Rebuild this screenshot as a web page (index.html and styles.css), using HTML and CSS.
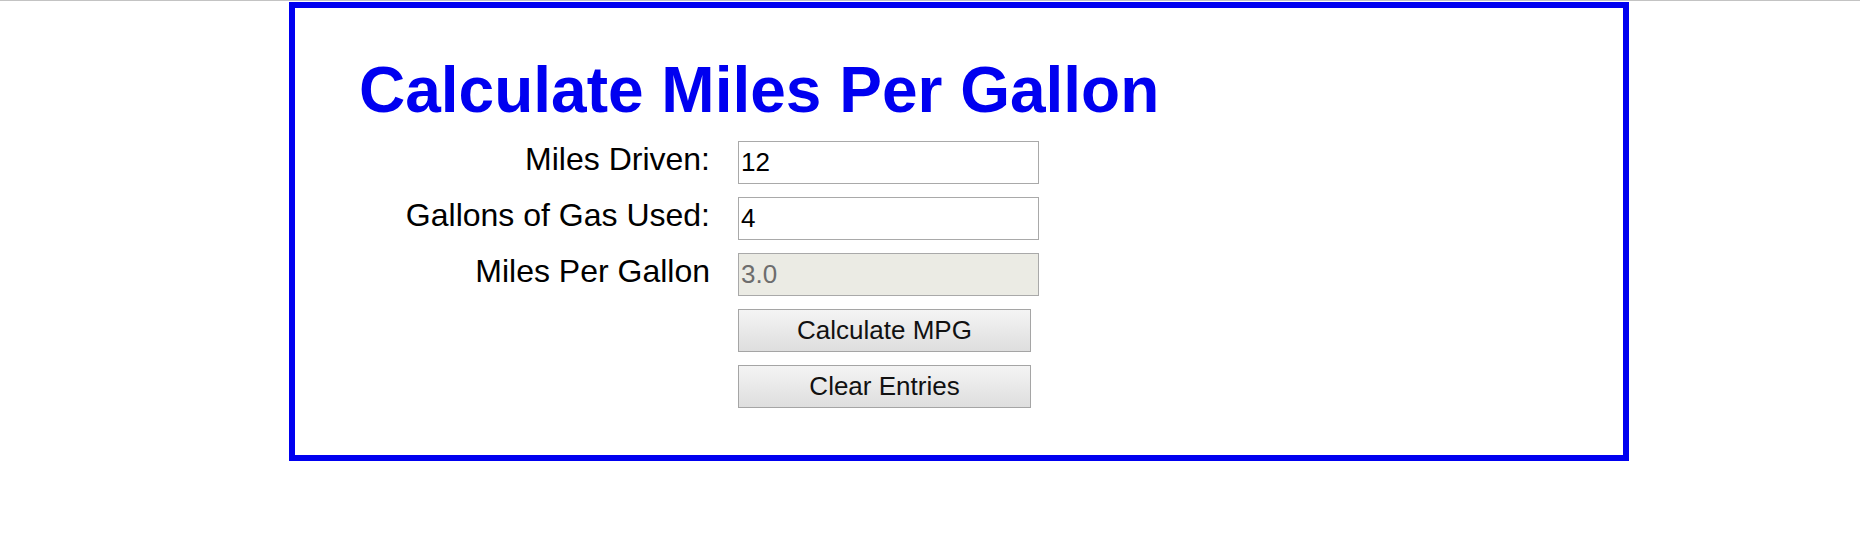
FILE: index.html
```html
<!DOCTYPE html>
<html lang="en">
<head>
<meta charset="utf-8">
<title>Calculate Miles Per Gallon</title>
<link rel="stylesheet" href="styles.css">
</head>
<body>
<div class="topline"></div>
<main class="box">
  <h1 class="title">Calculate Miles Per Gallon</h1>
  <form class="form">
    <label class="label" for="miles">Miles Driven:</label>
    <input class="field" type="text" id="miles" value="12">
    <label class="label" for="gallons">Gallons of Gas Used:</label>
    <input class="field" type="text" id="gallons" value="4">
    <label class="label" for="mpg">Miles Per Gallon</label>
    <input class="field field-disabled" type="text" id="mpg" value="3.0" disabled>
    <span class="spacer"></span>
    <button class="btn" type="button">Calculate MPG</button>
    <span class="spacer"></span>
    <button class="btn" type="button">Clear Entries</button>
  </form>
</main>
</body>
</html>
```

FILE: styles.css
```css
html, body {
  margin: 0;
  padding: 0;
  background: #ffffff;
}
body {
  font-family: "Liberation Sans", Arial, sans-serif;
}
.topline {
  height: 1px;
  background: #c3c3c3;
}
.box {
  box-sizing: border-box;
  width: 1340px;
  margin: 1px 0 0 289px;
  border: 6px solid #0000f0;
  padding: 45px 0 47px 64px;
}
.title {
  margin: 0 0 14px 0;
  font-size: 64px;
  line-height: 74px;
  font-weight: bold;
  color: #0000f0;
}
.form {
  display: grid;
  grid-template-columns: 351px 301px;
  column-gap: 28px;
  row-gap: 13px;
  grid-auto-rows: 43px;
}
.label {
  align-self: start;
  text-align: right;
  font-size: 32px;
  line-height: 36px;
  color: #000000;
  white-space: nowrap;
}
.field {
  box-sizing: border-box;
  width: 301px;
  height: 43px;
  margin: 0;
  border: 1px solid #a9a9a9;
  padding: 0 2px;
  font-family: "Liberation Sans", Arial, sans-serif;
  font-size: 26px;
  color: #000000;
  background: #ffffff;
  outline: none;
}
.field-disabled {
  background: #ebebe4;
  color: #6d6d6d;
  -webkit-text-fill-color: #6d6d6d;
  opacity: 1;
}
.btn {
  box-sizing: border-box;
  width: 293px;
  height: 43px;
  margin: 0;
  border: 1px solid #a5a5a5;
  border-radius: 0;
  padding: 0;
  background: linear-gradient(#f4f4f4, #dedede);
  font-family: "Liberation Sans", Arial, sans-serif;
  font-size: 26px;
  color: #111111;
}
```
